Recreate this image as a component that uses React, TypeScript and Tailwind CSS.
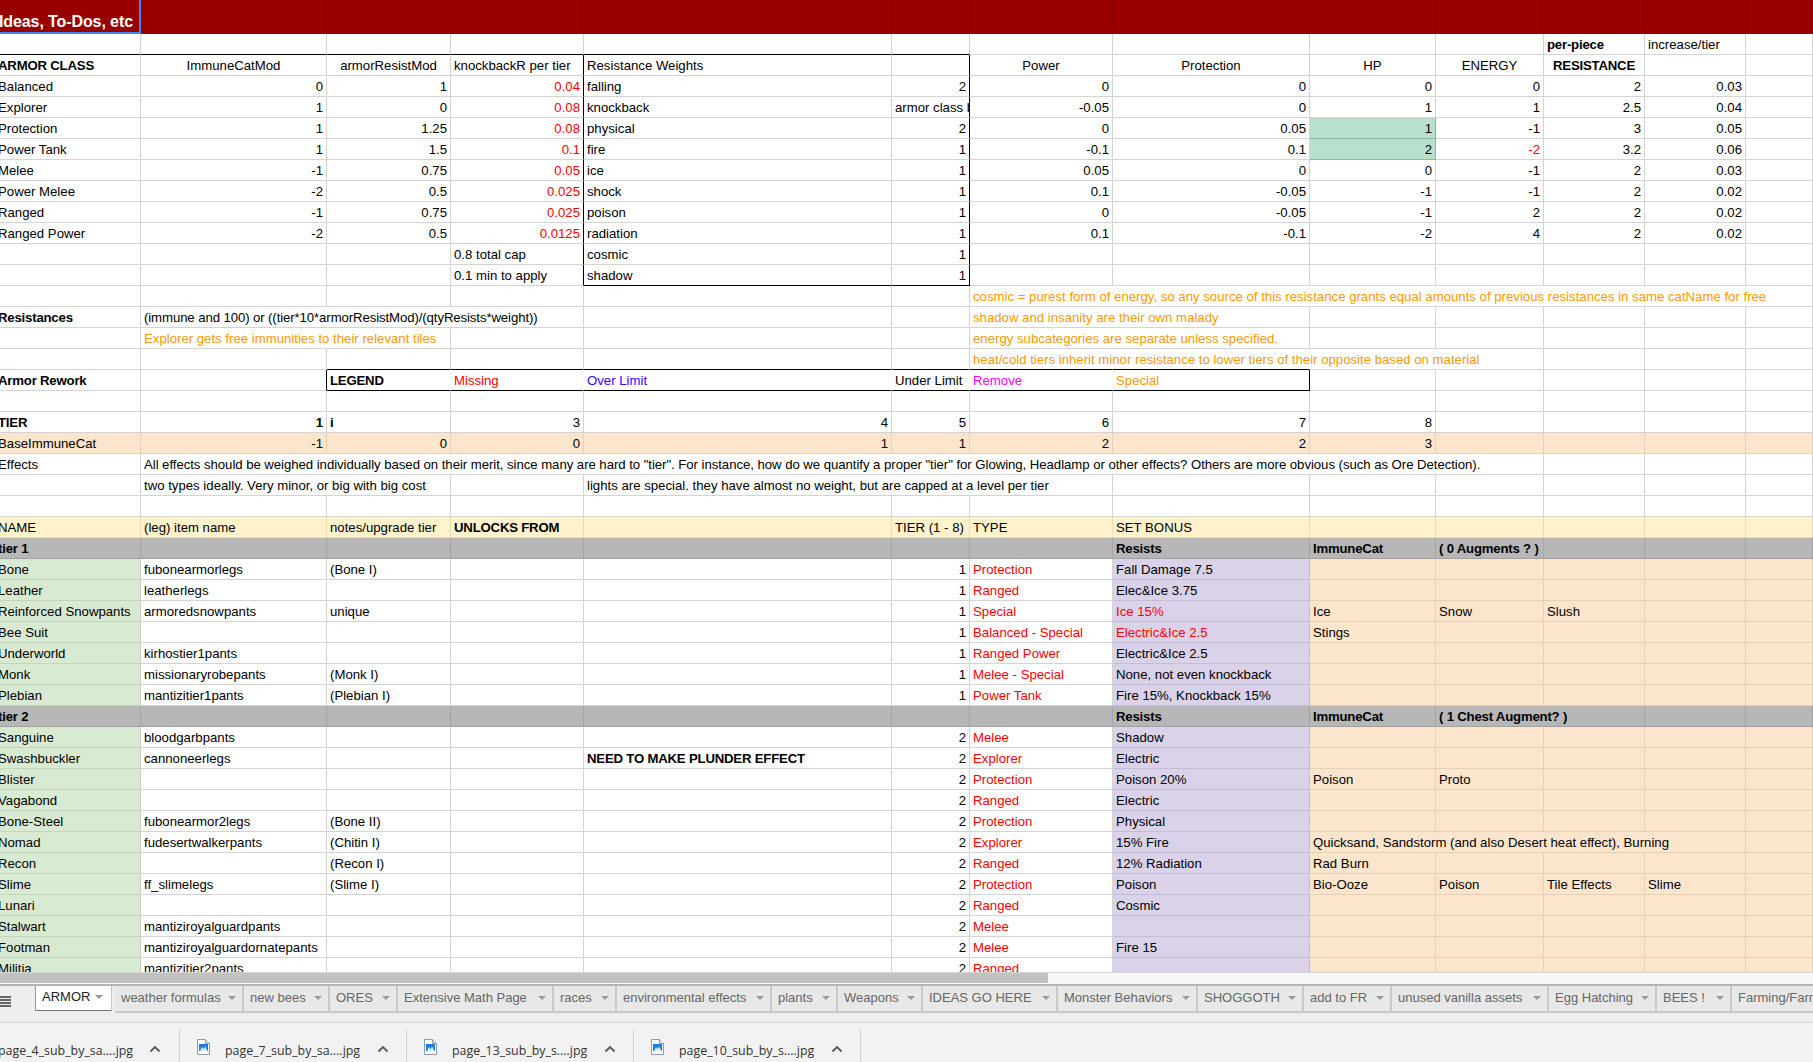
import React from 'react';
import { twMerge } from 'tailwind-merge';

type Cell = { v?: string; n?: number; c?: string };

const R = 'text-right';
const C = 'text-center';
const B = 'font-bold tracking-[-0.2px]';
const RED = 'text-[#ff0000]';
const ORANGE = 'text-[#ff9900]';
const GREEN = 'bg-[#d9ead3] border-r-[#bfd3b8] border-b-[#c3d5bd]';
const PEACH = 'bg-[#fce5cd] border-r-[#e5d0b9] border-b-[#e5d0b9]';
const LILAC = 'bg-[#d9d2e9] border-r-[#c4bdd4] border-b-[#c4bdd4]';
const CREAM = 'bg-[#fff2cc] border-r-[#e8dcb9] border-b-[#e8dcb9]';
const GRAY = 'bg-[#b7b7b7] border-r-[#a5a5a5] border-b-[#a0a0a0] font-bold tracking-[-0.2px]';
const MINT = 'bg-[#b7e1cd] border-r-[#8fb5a3] border-b-[#8fb5a3]';
const BOX_R = 'border-r-black';
const BOX_B = 'border-b-black';
const NO_R = 'border-r-transparent';

const widths = ['w-[141px]', 'w-[186px]', 'w-[124px]', 'w-[133px]', 'w-[308px]', 'w-[78px]', 'w-[143px]', 'w-[197px]', 'w-[126px]', 'w-[108px]', 'w-[101px]', 'w-[101px]', 'w-[67px]'];

const blank = (n: number, c?: string): Cell[] => Array.from({ length: n }, () => ({ c }));

const classRows: string[][] = [
  ['Balanced', '0', '1', '0.04', 'falling', '2', '0', '0', '0', '0', '2', '0.03'],
  ['Explorer', '1', '0', '0.08', 'knockback', 'armor class based', '-0.05', '0', '1', '1', '2.5', '0.04'],
  ['Protection', '1', '1.25', '0.08', 'physical', '2', '0', '0.05', '1', '-1', '3', '0.05'],
  ['Power Tank', '1', '1.5', '0.1', 'fire', '1', '-0.1', '0.1', '2', '-2', '3.2', '0.06'],
  ['Melee', '-1', '0.75', '0.05', 'ice', '1', '0.05', '0', '0', '-1', '2', '0.03'],
  ['Power Melee', '-2', '0.5', '0.025', 'shock', '1', '0.1', '-0.05', '-1', '-1', '2', '0.02'],
  ['Ranged', '-1', '0.75', '0.025', 'poison', '1', '0', '-0.05', '-1', '2', '2', '0.02'],
  ['Ranged Power', '-2', '0.5', '0.0125', 'radiation', '1', '0.1', '-0.1', '-2', '4', '2', '0.02'],
];

const classCells = (row: string[], i: number): Cell[] => [
  { v: row[0] },
  { v: row[1], c: R },
  { v: row[2], c: R },
  { v: row[3], c: twMerge(R, RED, BOX_R) },
  { v: row[4] },
  { v: row[5], c: twMerge(i === 1 ? '' : R, BOX_R) },
  { v: row[6], c: R },
  { v: row[7], c: R },
  { v: row[8], c: twMerge(R, i === 2 || i === 3 ? MINT : '') },
  { v: row[9], c: twMerge(R, i === 3 ? RED : '') },
  { v: row[10], c: R },
  { v: row[11], c: R },
  {},
];

type Item = { name: string; item?: string; note?: string; plan?: string; tier: string; type: string; bonus?: string; bonusRed?: boolean; extra?: string[]; wide?: string };

const tier1: Item[] = [
  { name: 'Bone', item: 'fubonearmorlegs', note: '(Bone I)', tier: '1', type: 'Protection', bonus: 'Fall Damage 7.5' },
  { name: 'Leather', item: 'leatherlegs', tier: '1', type: 'Ranged', bonus: 'Elec&Ice 3.75' },
  { name: 'Reinforced Snowpants', item: 'armoredsnowpants', note: 'unique', tier: '1', type: 'Special', bonus: 'Ice 15%', bonusRed: true, extra: ['Ice', 'Snow', 'Slush'] },
  { name: 'Bee Suit', tier: '1', type: 'Balanced - Special', bonus: 'Electric&Ice 2.5', bonusRed: true, extra: ['Stings'] },
  { name: 'Underworld', item: 'kirhostier1pants', tier: '1', type: 'Ranged Power', bonus: 'Electric&Ice 2.5' },
  { name: 'Monk', item: 'missionaryrobepants', note: '(Monk I)', tier: '1', type: 'Melee - Special', bonus: 'None, not even knockback' },
  { name: 'Plebian', item: 'mantizitier1pants', note: '(Plebian I)', tier: '1', type: 'Power Tank', bonus: 'Fire 15%, Knockback 15%' },
];

const tier2: Item[] = [
  { name: 'Sanguine', item: 'bloodgarbpants', tier: '2', type: 'Melee', bonus: 'Shadow' },
  { name: 'Swashbuckler', item: 'cannoneerlegs', plan: 'NEED TO MAKE PLUNDER EFFECT', tier: '2', type: 'Explorer', bonus: 'Electric' },
  { name: 'Blister', tier: '2', type: 'Protection', bonus: 'Poison 20%', extra: ['Poison', 'Proto'] },
  { name: 'Vagabond', tier: '2', type: 'Ranged', bonus: 'Electric' },
  { name: 'Bone-Steel', item: 'fubonearmor2legs', note: '(Bone II)', tier: '2', type: 'Protection', bonus: 'Physical' },
  { name: 'Nomad', item: 'fudesertwalkerpants', note: '(Chitin I)', tier: '2', type: 'Explorer', bonus: '15% Fire', wide: 'Quicksand, Sandstorm (and also Desert heat effect), Burning' },
  { name: 'Recon', note: '(Recon I)', tier: '2', type: 'Ranged', bonus: '12% Radiation', extra: ['Rad Burn'] },
  { name: 'Slime', item: 'ff_slimelegs', note: '(Slime I)', tier: '2', type: 'Protection', bonus: 'Poison', extra: ['Bio-Ooze', 'Poison', 'Tile Effects', 'Slime'] },
  { name: 'Lunari', tier: '2', type: 'Ranged', bonus: 'Cosmic' },
  { name: 'Stalwart', item: 'mantiziroyalguardpants', tier: '2', type: 'Melee' },
  { name: 'Footman', item: 'mantiziroyalguardornatepants', tier: '2', type: 'Melee', bonus: 'Fire 15' },
  { name: 'Militia', item: 'mantizitier2pants', tier: '2', type: 'Ranged' },
];

const itemCells = (it: Item): Cell[] => {
  const tail: Cell[] = it.wide
    ? [{ v: it.wide, n: 4, c: PEACH }, { c: PEACH }]
    : Array.from({ length: 5 }, (_, i) => ({ v: it.extra?.[i], c: PEACH }));
  return [
    { v: it.name, c: GREEN },
    { v: it.item },
    { v: it.note },
    {},
    { v: it.plan, c: B },
    { v: it.tier, c: R },
    { v: it.type, c: RED },
    { v: it.bonus, c: twMerge(LILAC, it.bonusRed ? RED : '') },
    ...tail,
  ];
};

const tierHead = (name: string, label: string, span: number): Cell[] => [
  { v: name, c: GRAY },
  ...blank(6, GRAY),
  { v: 'Resists', c: GRAY },
  { v: 'ImmuneCat', c: GRAY },
  { v: label, n: span, c: GRAY },
  ...blank(4 - span, GRAY),
];

const rows: Cell[][] = [
  [...blank(6, BOX_B), ...blank(4), { v: 'per-piece', c: B }, { v: 'increase/tier' }, {}],
  [
    { v: 'ARMOR CLASS', c: B },
    { v: 'ImmuneCatMod', c: C },
    { v: 'armorResistMod', c: C },
    { v: 'knockbackR per tier', c: BOX_R },
    { v: 'Resistance Weights' },
    { c: BOX_R },
    { v: 'Power', c: C },
    { v: 'Protection', c: C },
    { v: 'HP', c: C },
    { v: 'ENERGY', c: C },
    { v: 'RESISTANCE', c: twMerge(C, B) },
    {},
    {},
  ],
  ...classRows.map(classCells),
  [...blank(3), { v: '0.8 total cap', c: BOX_R }, { v: 'cosmic' }, { v: '1', c: twMerge(R, BOX_R) }, ...blank(7)],
  [...blank(3), { v: '0.1 min to apply', c: BOX_R }, { v: 'shadow', c: BOX_B }, { v: '1', c: twMerge(R, BOX_R, BOX_B) }, ...blank(7)],
  [...blank(6), { v: 'cosmic = purest form of energy, so any source of this resistance grants equal amounts of previous resistances in same catName for free', n: 7, c: ORANGE }],
  [{ v: 'Resistances', c: B }, { v: '(immune and 100) or ((tier*10*armorResistMod)/(qtyResists*weight))', n: 3, c: 'tracking-[-0.1px]' }, {}, {}, { v: 'shadow and insanity are their own malady', n: 2, c: ORANGE }, ...blank(5)],
  [{}, { v: 'Explorer gets free immunities to their relevant tiles', n: 2, c: ORANGE }, ...blank(3), { v: 'energy subcategories are separate unless specified.', n: 2, c: ORANGE }, ...blank(5)],
  [
    ...blank(2),
    ...blank(4, BOX_B),
    // runs over the next three cells, the legend box top only reaches col 7
    { v: 'heat/cold tiers inherit minor resistance to lower tiers of their opposite based on material', c: twMerge(ORANGE, BOX_B, NO_R, 'overflow-visible') },
    { c: twMerge(BOX_B, NO_R) },
    { c: NO_R },
    {},
    ...blank(3),
  ],
  [
    { v: 'Armor Rework', c: B },
    { c: BOX_R },
    { v: 'LEGEND', c: twMerge(B, NO_R, BOX_B) },
    { v: 'Missing', c: twMerge(RED, NO_R, BOX_B) },
    { v: 'Over Limit', c: twMerge('text-[#3c00ff]', NO_R, BOX_B) },
    { v: 'Under Limit', c: twMerge(NO_R, BOX_B) },
    { v: 'Remove', c: twMerge('text-[#ff00ff]', NO_R, BOX_B) },
    { v: 'Special', c: twMerge(ORANGE, BOX_R, BOX_B) },
    ...blank(5),
  ],
  blank(13),
  [
    { v: 'TIER', c: B },
    { v: '1', c: twMerge(R, B) },
    { v: 'i', c: B },
    ...['3', '4', '5', '6', '7', '8'].map((v) => ({ v, c: R })),
    ...blank(4),
  ],
  [
    { v: 'BaseImmuneCat', c: PEACH },
    ...['-1', '0', '0', '1', '1', '2', '2', '3'].map((v) => ({ v, c: twMerge(R, PEACH) })),
    ...blank(4, PEACH),
  ],
  [
    { v: 'Effects' },
    { v: 'All effects should be weighed individually based on their merit, since many are hard to "tier". For instance, how do we quantify a proper "tier" for Glowing, Headlamp or other effects? Others are more obvious (such as Ore Detection).', n: 9, c: 'tracking-[-0.05px]' },
    ...blank(3),
  ],
  [
    {},
    { v: 'two types ideally. Very minor, or big with big cost', n: 2 },
    {},
    { v: 'lights are special. they have almost no weight, but are capped at a level per tier', n: 3 },
    ...blank(6),
  ],
  blank(13),
  [
    { v: 'NAME', c: CREAM },
    { v: '(leg) item name', c: CREAM },
    { v: 'notes/upgrade tier', c: CREAM },
    { v: 'UNLOCKS FROM', c: twMerge(CREAM, B) },
    { c: CREAM },
    { v: 'TIER (1 - 8)', c: CREAM },
    { v: 'TYPE', c: CREAM },
    { v: 'SET BONUS', c: CREAM },
    ...blank(5, CREAM),
  ],
  tierHead('tier 1', '( 0 Augments ? )', 1),
  ...tier1.map(itemCells),
  tierHead('tier 2', '( 1 Chest Augment? )', 2),
  ...tier2.map(itemCells),
];

const tabs = [
  { label: 'weather formulas', w: 'w-[129px]' },
  { label: 'new bees', w: 'w-[86px]' },
  { label: 'ORES', w: 'w-[68px]' },
  { label: 'Extensive Math Page', w: 'w-[156px]' },
  { label: 'races', w: 'w-[63px]' },
  { label: 'environmental effects', w: 'w-[155px]' },
  { label: 'plants', w: 'w-[66px]' },
  { label: 'Weapons', w: 'w-[85px]' },
  { label: 'IDEAS GO HERE', w: 'w-[135px]' },
  { label: 'Monster Behaviors', w: 'w-[140px]' },
  { label: 'SHOGGOTH', w: 'w-[106px]' },
  { label: 'add to FR', w: 'w-[88px]' },
  { label: 'unused vanilla assets', w: 'w-[157px]' },
  { label: 'Egg Hatching', w: 'w-[108px]' },
  { label: 'BEES !', w: 'w-[75px]' },
  { label: 'Farming/Farms', w: 'w-[120px]' },
];

const downloads = ['page_7_sub_by_sa....jpg', 'page_13_sub_by_s....jpg', 'page_10_sub_by_s....jpg'];

const Caret = () => <span className="w-0 h-0 border-x-[4px] border-x-transparent border-t-[4px] border-t-[#999999]" />;

const Chevron = () => (
  <svg width="12" height="8" viewBox="0 0 12 8" className="shrink-0 -mt-[5px]">
    <path d="M1.5 6.5 L6 2 L10.5 6.5" fill="none" stroke="#5a5a5a" strokeWidth="1.8" />
  </svg>
);

const FileIcon = () => (
  <svg width="13" height="16" viewBox="0 0 13 16" className="shrink-0">
    <path d="M0.5 0.5 H8.5 L12.5 4.5 V15.5 H0.5 Z" fill="#fff" stroke="#8c9bb0" />
    <path d="M8.5 0.5 V4.5 H12.5" fill="#dfe5ee" stroke="#8c9bb0" />
    <rect x="2" y="5" width="9" height="7" fill="#1a7fdc" />
    <path d="M3 12 L5 8 L6.5 10 L8 7.5 L10.5 12 Z" fill="#d8ecfb" />
  </svg>
);

const App: React.FC = () => {
  return (
    <div className="w-[1813px] h-[1062px] overflow-hidden bg-white font-['Liberation_Sans',Arial,sans-serif] text-[13.2px] text-black">
      <div className="h-[973px] overflow-hidden border-b border-[#d4d4d4]">
        <table className="table-fixed w-[1813px] border-separate border-spacing-0">
          <colgroup>
            {widths.map((w, i) => (
              <col key={i} className={w} />
            ))}
          </colgroup>
          <tbody>
            <tr className="h-[34px]">
              <td className="bg-[#980000] border-r-2 border-b-2 border-[#4285f4] pl-0 pt-[11px] text-[16px] leading-[20px] font-bold tracking-[-0.1px] text-white whitespace-nowrap overflow-hidden">
                <span className="-ml-[1px]">Ideas, To-Dos, etc</span>
              </td>
              {widths.slice(1).map((w, i) => (
                <td key={i} className="bg-[#980000] border-r border-[#860000]" />
              ))}
            </tr>
            {rows.map((row, y) => (
              <tr key={y} className="h-[21px]">
                {row.map((cell, x) => (
                  <td
                    key={x}
                    colSpan={cell.n}
                    className={twMerge(
                      'h-[21px] border-r border-b border-r-[#d4d4d4] border-b-[#d4d4d4] px-[3px] align-bottom leading-[19px] whitespace-nowrap overflow-hidden',
                      x === 0 ? 'pl-0' : '',
                      cell.c,
                    )}
                  >
                    {x === 0 && cell.v ? <span className="-ml-[2px] inline-block">{cell.v}</span> : cell.v}
                  </td>
                ))}
              </tr>
            ))}
          </tbody>
        </table>
      </div>

      <div className="h-[11px] bg-[#f8f8f8]">
        <div className="h-[10px] w-[1048px] bg-[#c2c2c2]" />
      </div>

      <div className="h-[39px] bg-[#eeeeee] border-t-2 border-b border-t-[#b4b4b4] border-b-[#d9d9d9] flex items-start overflow-hidden text-[13px]">
        <div className="w-[35px] shrink-0 h-[28px] flex flex-col gap-[1px] pt-[10px]">
          <span className="block w-[11px] h-[2px] bg-[#666666]" />
          <span className="block w-[11px] h-[2px] bg-[#666666]" />
          <span className="block w-[11px] h-[2px] bg-[#666666]" />
          <span className="block w-[11px] h-[2px] bg-[#666666]" />
        </div>
        <div className="w-[77px] shrink-0 h-[27px] -mt-[2px] mr-[3px] pb-[1px] bg-white border-l border-r border-b border-l-[#9a9a9a] border-r-[#c8c8c8] border-b-[#777777] flex items-center justify-between pl-[6px] pr-[8px] text-[#222222]">
          ARMOR
          <Caret />
        </div>
        {tabs.map((t) => (
          <div
            key={t.label}
            className={twMerge('shrink-0 h-[27px] pb-[2px] bg-[#e8e8e8] border-r-2 border-b-2 border-[#c8c8c8] flex items-center justify-between pl-[6px] pr-[6px] text-[#666666] whitespace-nowrap', t.w)}
          >
            {t.label}
            <Caret />
          </div>
        ))}
      </div>

      <div className="h-[39px] bg-[#f2f2f2] flex overflow-hidden font-['Open_Sans',sans-serif] text-[12.4px] text-[#333333]">
        <div className="w-[182px] shrink-0 mt-[6px] -ml-[2px] pt-[12px] pr-[17px] border-r border-[#cfcfcf] flex items-center gap-[16px]">
          <span className="whitespace-nowrap">page_4_sub_by_sa....jpg</span>
          <Chevron />
        </div>
        {downloads.map((name) => (
          <div key={name} className="w-[227px] shrink-0 mt-[6px] border-r border-[#cfcfcf] flex items-center pl-[17px] pr-[17px] pt-[12px]">
            <span className="-mt-[10px]">
              <FileIcon />
            </span>
            <span className="ml-[15px] whitespace-nowrap flex-1">{name}</span>
            <Chevron />
          </div>
        ))}
      </div>
    </div>
  );
};

export default App;
